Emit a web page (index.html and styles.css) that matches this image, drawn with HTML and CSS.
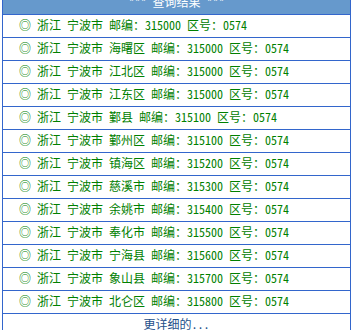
FILE: index.html
```html
<!DOCTYPE html>
<html lang="zh-CN">
<head>
<meta charset="utf-8">
<title>查询结果</title>
<link rel="stylesheet" href="styles.css">
</head>
<body>
<div class="results">
  <div class="row head">*** 查询结果 ***</div>
  <div class="row item">◎ 浙江 宁波市 邮编：315000 区号：0574</div>
  <div class="row item">◎ 浙江 宁波市 海曙区 邮编：315000 区号：0574</div>
  <div class="row item">◎ 浙江 宁波市 江北区 邮编：315000 区号：0574</div>
  <div class="row item">◎ 浙江 宁波市 江东区 邮编：315000 区号：0574</div>
  <div class="row item">◎ 浙江 宁波市 鄞县 邮编：315100 区号：0574</div>
  <div class="row item">◎ 浙江 宁波市 鄞州区 邮编：315100 区号：0574</div>
  <div class="row item">◎ 浙江 宁波市 镇海区 邮编：315200 区号：0574</div>
  <div class="row item">◎ 浙江 宁波市 慈溪市 邮编：315300 区号：0574</div>
  <div class="row item">◎ 浙江 宁波市 余姚市 邮编：315400 区号：0574</div>
  <div class="row item">◎ 浙江 宁波市 奉化市 邮编：315500 区号：0574</div>
  <div class="row item">◎ 浙江 宁波市 宁海县 邮编：315600 区号：0574</div>
  <div class="row item">◎ 浙江 宁波市 象山县 邮编：315700 区号：0574</div>
  <div class="row item">◎ 浙江 宁波市 北仑区 邮编：315800 区号：0574</div>
  <div class="row more">更详细的...</div>
</div>
</body>
</html>
```
FILE: styles.css
```css
html, body {
  margin: 0;
  padding: 0;
  background: #ffffff;
}
body {
  font-family: "Noto Sans Mono CJK SC", "Noto Sans CJK SC", monospace;
  font-size: 12px;
}
.results {
  margin: -9px 0 0 2px;
  width: 347px;
  padding: 1px;
  background: #3366cc;
  display: grid;
  row-gap: 1px;
}
.row {
  height: 22px;
  line-height: 19px;
  background: #ffffff;
  white-space: pre;
  overflow: hidden;
}
.head {
  background: #6699cc;
  color: #ffffff;
  text-align: center;
}
.item {
  color: #008000;
  padding-left: 16px;
}
.more {
  color: #1d4f8a;
  text-align: center;
}
```
